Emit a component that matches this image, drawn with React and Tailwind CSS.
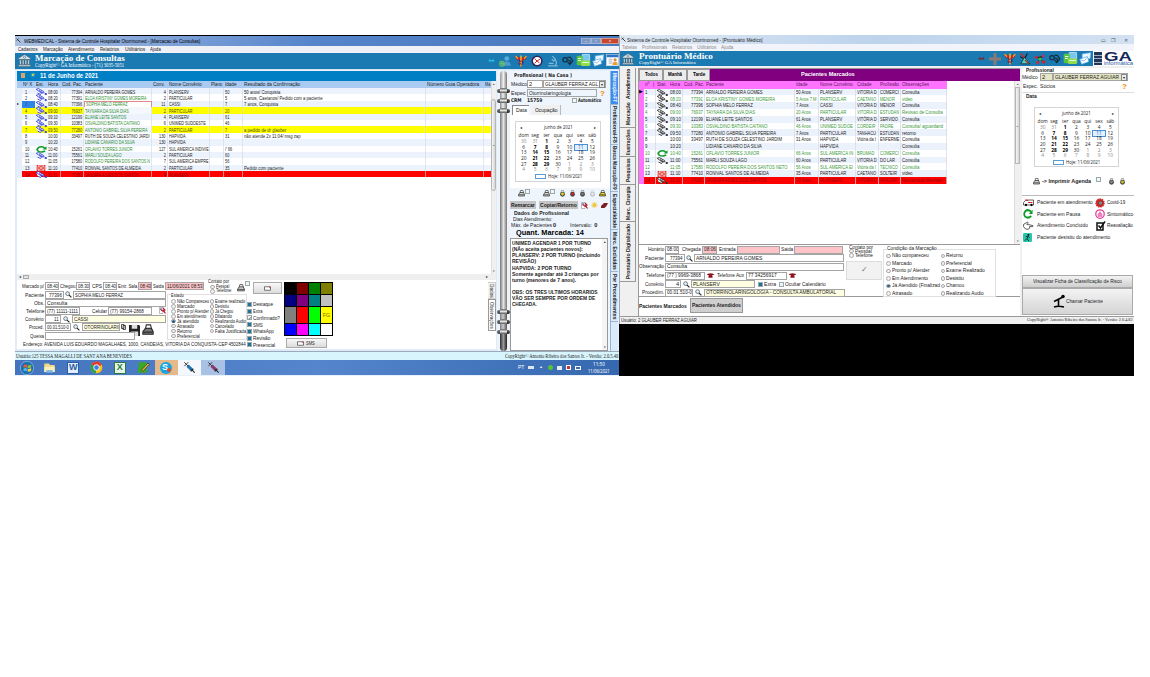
import React, { useLayoutEffect, useRef } from "react";

/* Text squeezed horizontally (or vertically, with v) to a given length. */
function T({ w, v, c = "", right, children }) {
  const ref = useRef(null);
  useLayoutEffect(() => {
    const el = ref.current;
    if (!w) return;
    const n = v ? el.offsetHeight : el.offsetWidth;
    if (n) el.style.transform = v ? `scaleY(${w / n})` : `scaleX(${w / n})`;
  });
  const box = v ? { height: w } : { width: w };
  return (
    <div className={"flex shrink-0 whitespace-nowrap " + (v ? "flex-col " : "") + (right ? "justify-end " : "") + c} style={box}>
      <span ref={ref} className={"block w-max shrink-0 " + (v ? "h-max origin-top [writing-mode:vertical-rl]" : right ? "origin-right" : "origin-left")}>{children}</span>
    </div>
  );
}

function Cell({ children, right, s = "scale-x-[.76]", c = "" }) {
  return (
    <div className={"flex items-center overflow-hidden whitespace-nowrap px-[1px] " + (right ? "justify-end " : "") + c}>
      <span className={"block shrink-0 " + s + (right ? " origin-right" : " origin-left")}>{children}</span>
    </div>
  );
}

function Field({ c = "", children, w, right }) {
  return (
    <div className={"flex h-[8px] shrink-0 items-center overflow-hidden border border-[#a5a5a5] px-[1px] " + (right ? "justify-end " : "") + (c.includes("bg-") ? "" : "bg-white ") + c}>
      {children && <T w={w}>{children}</T>}
    </div>
  );
}
const Label = ({ c, w, children }) => <div className={"flex shrink-0 justify-end pr-[1px] " + c}><T w={w}>{children}</T></div>;
const Radio = ({ on }) => (
  <span className="flex size-[4.5px] shrink-0 items-center justify-center rounded-full border-[0.7px] border-[#aaa] bg-[#f2f2f2]">
    {on && <span className="size-[2.6px] rounded-full bg-[#1f5f88]" />}
  </span>
);
const Check = ({ on, tick, c = "" }) => (
  <span className={"flex size-[5px] shrink-0 items-center justify-center border border-[#9aa] bg-[#f4f4f4] text-[5px] text-[#345] " + c}>
    {on && <span className="size-[3px] bg-[#22709c]" />}{tick && "✓"}
  </span>
);

/* ---------- icons ---------- */
const Hand = ({ color }) => (
  <svg viewBox="0 0 24 14" className="h-[7px] w-[12px] shrink-0" fill="#fff" stroke={color} strokeWidth="1.7">
    <path d="M2 3 Q7 -1 10 3 L17 7 Q20 9 16 10 L12 9 M3 3 L11 9 Q14 12 11 13 L5 10 M8 5 L15 9 M20 11h3v2h-3z" />
  </svg>
);
const Refresh = ({ c = "h-[7px] w-[11px]" }) => (
  <svg viewBox="0 0 24 20" preserveAspectRatio="none" className={c + " shrink-0"} fill="none" stroke="#0b9c2a" strokeWidth="4">
    <path d="M19 5 Q12 0 6 4 Q0 10 5 15 Q12 20 20 14" /><path d="M23 1v9h-9z" fill="#0b9c2a" stroke="none" />
  </svg>
);
const Mail = () => (
  <svg viewBox="0 0 20 14" className="h-[6px] w-[10px] shrink-0"><rect width="20" height="14" fill="#e32218" /><path d="M3 2l14 10M17 2L3 12M3 2h14v10H3z" fill="none" stroke="#fff" strokeWidth="1.5" /></svg>
);
const Mag = ({ c = "" }) => (
  <svg viewBox="0 0 12 12" className={"size-[7px] shrink-0 " + c}><circle cx="4.5" cy="4.5" r="3.3" fill="#d8eefa" stroke="#444" strokeWidth="1.1" /><path d="M7 7l4 4" stroke="#222" strokeWidth="2" /></svg>
);
const Printer = ({ color = "#d4d4d4", c = "size-[7px]" }) => (
  <svg viewBox="0 0 14 14" className={c + " shrink-0"}><path d="M4 6l1-5h5l1 5z" fill="#fff" stroke="#333" strokeWidth="1.3" /><path d="M1 9l3-4h7l2 4v3H1z" fill={color} stroke="#222" strokeWidth="1.3" /><path d="M2 9.5h10" stroke="#222" strokeWidth="1.3" /></svg>
);
const Gem = ({ color }) => (
  <svg viewBox="0 0 14 14" className="size-[7px] shrink-0"><path d="M4 5l1-4h4l1 4" fill="#fff" stroke="#555" /><circle cx="7" cy="8.5" r="4.8" fill="#444" /><circle cx="7" cy="8" r="2.8" fill={color} /></svg>
);
const Temple = ({ c }) => (
  <svg viewBox="0 0 24 24" className={c + " shrink-0"} fill="#d8e4ea" stroke="#3c5663" strokeWidth=".9">
    <path d="M1 8L12 1l11 7v2H1zM3 11h3v9H3zM8 11h3v9H8zM13 11h3v9h-3zM18 11h3v9h-3zM1 20h22v3H1z" /><circle cx="12" cy="6" r="2" />
  </svg>
);
const SnakeStaff = ({ c }) => (
  <svg viewBox="0 0 20 20" className={c + " shrink-0"}>
    <path d="M0 2l6 1 4 3 4-3 6-1-3 6-5 1H8L3 8z" fill="#c4222a" />
    <path d="M1 2l4 4M19 2l-4 4" stroke="#f3c422" strokeWidth="2" />
    <path d="M6 9q8 1 7 4t-5 2l3 4" fill="none" stroke="#22358f" strokeWidth="2.6" />
    <path d="M10 1v18" stroke="#f0c322" strokeWidth="2.4" /><path d="M13 9q-7 2-5 5l4 2" fill="none" stroke="#c4222a" strokeWidth="1.8" />
  </svg>
);
const UserPlus = ({ c }) => (
  <svg viewBox="0 0 20 20" className={c + " shrink-0"}><circle cx="13" cy="6" r="4" fill="#5aa7dd" /><path d="M6 18q1-7 7-7t7 7z" fill="#4c99d3" /><circle cx="5" cy="14.500" r="4" fill="none" stroke="#5fc05f" strokeWidth="2" /><path d="M5 12v5M2.5 14.500h5" stroke="#7ad07a" strokeWidth="1.6" /></svg>
);
const ClockI = ({ c }) => (
  <svg viewBox="0 0 20 20" className={c + " shrink-0"}><circle cx="10" cy="10" r="8" fill="#fff" stroke="#33245d" strokeWidth="2.6" /><path d="M6 6l4 4 5-3M6 14l4-4 4 3" stroke="#c5252b" strokeWidth="1.6" fill="none" /></svg>
);
const Scope = ({ c }) => (
  <svg viewBox="0 0 20 20" className={c + " shrink-0"} fill="none" stroke="#7fb9d8" strokeWidth="2"><path d="M9 2l5 5-3 3-3-3M13 8q5 4 1 9M2 18h16M3 14h8" /></svg>
);
const Eye = ({ c }) => (
  <svg viewBox="0 0 20 16" className={c + " shrink-0"} fill="none" stroke="#142d3b" strokeWidth="2"><circle cx="5" cy="6" r="3.600" /><path d="M9 2h5l4 6-5 6-4-5M9 6l5 2-1 6" /></svg>
);
const Money = ({ c }) => (
  <svg viewBox="0 0 22 20" className={c + " shrink-0"}><rect x="9" y="1" width="11" height="10" rx="1" fill="#79c7ec" stroke="#d8f2fb" /><rect x="1" y="3" width="9" height="14" rx="2" fill="#57c247" /><rect x="7" y="10" width="14" height="8" rx="2" fill="#8fdc4f" /><path d="M3 7h5M9 13h10M3 10h4" stroke="#efffe6" strokeWidth="1.4" /></svg>
);
const Cards = ({ c }) => (
  <svg viewBox="0 0 20 20" className={c + " shrink-0"}><path d="M5 3l13-2-1 9-12 2z" fill="#e9f6ff" stroke="#74bdf0" /><path d="M1 11l12-4 2 8-11 4z" fill="#fff" stroke="#4ca5ef" /><path d="M2 12l6 2 5-6" fill="none" stroke="#58a9e8" /></svg>
);
const Sheet = ({ c }) => (
  <svg viewBox="0 0 20 20" className={c + " shrink-0"}><rect x="1" y="1" width="18" height="17" fill="#fff" stroke="#d6e6f1" /><path d="M1 3h18" stroke="#2e72c8" strokeWidth="4" /><path d="M4 8h6M4 11h6M4 14h6" stroke="#7b8a98" /><circle cx="14" cy="9" r="2.500" fill="#d98b44" /><path d="M10 17q0-5 4-5t4 5z" fill="#e8a13a" /></svg>
);
const Flask = ({ c }) => (
  <svg viewBox="0 0 20 20" className={c + " shrink-0"}><path d="M3 1l8 9" stroke="#c52a27" strokeWidth="2.5" /><path d="M9 7l9 11H3z" fill="#4fd0c5" stroke="#192b2e" strokeWidth="1.3" /><path d="M14 1l-4 7M2 6l5 3" stroke="#111" strokeWidth="1.8" /><path d="M10 12l6 6" stroke="#c52a27" strokeWidth="2" /></svg>
);
const Molecule = ({ c }) => (
  <svg viewBox="0 0 20 20" className={c + " shrink-0"}><path d="M4 7l6 3 6-5M10 10l-4 6M10 10l6 6" stroke="#222" strokeWidth="1.5" /><circle cx="4" cy="7" r="2.6" fill="#cf2634" /><circle cx="15" cy="5" r="2.6" fill="#bd2d65" /><circle cx="10" cy="10" r="3" fill="#35b94e" /><circle cx="6" cy="16" r="2.6" fill="#d1293a" /><circle cx="16" cy="15" r="3" fill="#ca2430" /></svg>
);
const Arrows = ({ color }) => (
  <svg viewBox="0 0 10 8" className="h-[5px] w-[7px] shrink-0"><path d="M0 4l3-3v2h4V1l3 3-3 3V5H3v2z" fill={color} /></svg>
);
const Syringe = ({ color }) => (
  <svg viewBox="0 0 20 20" className="size-[13px]" fill="none"><path d="M2 2l7 7M2 8l6-6" stroke="#333" strokeWidth="1.5" /><path d="M7 7l7 7" stroke={color} strokeWidth="5" /><path d="M13 13l5 5M12 16l4-4" stroke="#222" strokeWidth="1.6" /></svg>
);
const Phone = () => (
  <svg viewBox="0 0 16 10" className="h-[5px] w-[7px] shrink-0"><path d="M0 4q0-4 8-4t8 4h-4l1 6H3l1-6z" fill="#8e1420" /></svg>
);
const Pair = () => (
  <svg viewBox="0 0 14 14" className="size-[7px] shrink-0"><path d="M1 1h7v12H1z" fill="#fff" stroke="#777" /><path d="M8 2l4 4-3 1 4 6M3 5l6 4" stroke="#c01825" strokeWidth="2.2" /><circle cx="4" cy="4" r="1.6" fill="#223da8" /></svg>
);
const Question = () => <span className="shrink-0 text-[8px] font-bold text-[#f08a00]">?</span>;

/* ---------- calendar ---------- */
const weeks = [
  [30, 31, 1, 2, 3, 4, 5], [6, 7, 8, 9, 10, 11, 12], [13, 14, 15, 16, 17, 18, 19],
  [20, 21, 22, 23, 24, 25, 26], [27, 28, 29, 30, 1, 2, 3], [4, 5, 6, 7, 8, 9, 10],
];
function Calendar({ c }) {
  return (
    <div className={"border border-[#d5d5d5] bg-white font-['Open_Sans','Noto_Sans',sans-serif] text-[4.8px] leading-[5.6px] text-[#222] " + c}>
      <div className="flex h-[8px] items-center justify-between px-[2px] pt-[4px] text-[4px]"><span>◂</span><T w={29} c="text-[5.2px]">junho de 2021</T><span>▸</span></div>
      <div className="mt-[3px] grid h-[6px] grid-cols-7 text-center">
        {["dom", "seg", "ter", "qua", "qui", "sex", "sáb"].map((d) => <span key={d}>{d}</span>)}
      </div>
      {weeks.map((wk, i) => (
        <div key={i} className="grid h-[5.65px] grid-cols-7 text-center">
          {wk.map((d, j) => {
            const out = (i === 0 && j < 2) || (i === 4 && j > 3) || i === 5;
            const bold = !out && (j === 2 || (j === 1 && i > 0));
            const today = i === 1 && j === 5;
            return <span key={j} className={(out ? "text-[#888] " : "") + (bold ? "font-bold text-black " : "") + (today ? "bg-[#e2f0ff] text-[#2a6bb0] outline outline-[0.7px] outline-[#4a90d9]" : "")}>{d}</span>;
          })}
        </div>
      ))}
      <div className="flex h-[7px] items-center justify-center gap-[2px]"><span className="h-[4.5px] w-[11px] border border-[#5b9bd5]" /><T w={34}>Hoje: 11/06/2021</T></div>
    </div>
  );
}

/* ---------- left window ---------- */
const gridL = "grid grid-cols-[5px_13px_12px_13.5px_23.5px_68px_15.5px_42.5px_13.5px_19px_183px_58.5px_6.500px]";
const rowsL = [
  [1, "h", "08:00", "77394", "ARNALDO PEREIRA GOMES", 4, "PLANSERV", "", "50", "50 anos/ Conquista"],
  [2, "h", "08:20", "77391", "ELOA KRISTINY GOMES MOREIRA", 2, "PARTICULAR", "", "5", "5 anos, Caetanos/ Pedido com a paciente", "g"],
  [3, "h", "08:40", "77396", "SOPHIA MELO FERRAZ", 11, "CASSI", "", "7", "7 anos, Conquista", "g"],
  [4, "h", "09:00", "76937", "TAYNARA DA SILVA DIAS", 2, "PARTICULAR", "", "20", "", "y"],
  [5, "h", "09:10", "12199", "ELIANE LEITE SANTOS", 4, "PLANSERV", "", "61", "", "g"],
  [6, "h", "09:30", "10383", "OSVALDINO BATISTA CAITANO", 6, "UNIMED SUDOESTE", "", "46", "", "g"],
  [7, "h", "09:50", "77280", "ANTONIO GABRIEL SILVA PEREIRA", 2, "PARTICULAR", "", "7", "a pedido de dr glauber", "y"],
  [8, "", "10:00", "33497", "RUTH DE SOUZA CELESTINO JARDI", 130, "HAPVIDA", "", "31", "não atende 2x 11:04/ msg zap"],
  [9, "", "10:20", "", "LIDIANE CANARIO DA SILVA", 130, "HAPVIDA", "", "", "", "g"],
  [10, "r", "10:40", "15261", "OFLAVIO TORRES JUNIOR", 127, "SUL AMERICA INDIVIE", "", "/' 66", "", "g"],
  [11, "h", "11:00", "75561", "MARLI SOUZA LAGO", 2, "PARTICULAR", "", "60", "", "g"],
  [12, "", "11:05", "17580", "RODOLFO PEREIRA DOS SANTOS N", 7, "SUL AMERICA EMPRE", "", "56", "", "g"],
  [13, "m", "11:10", "77410", "RONIVAL SANTOS DE ALMEIDA", 2, "PARTICULAR", "", "35", "Pedido com paciente"],
  [14, "h", "11:11", "77281", "JANDIRA ALVES DOS SANTOS", 4, "PLANSERV", "", "73", "", "x"],
];
const Status = ({ k, color }) => k === "h" ? <Hand color={color} /> : k === "r" ? <Refresh /> : k === "m" ? <Mail /> : null;

function TableL() {
  return (
    <div className="flex h-[193px] w-[479px] bg-white text-[5.1px] leading-[6px]">
      <div className="w-[473.5px] overflow-hidden">
        <div className={gridL + " h-[7.5px] bg-[#a9cbf2] text-[5.4px] text-[#222]"}>
          <Cell /><Cell s="scale-x-[.85]">Nº X</Cell><Cell s="scale-x-[.85]">Est.</Cell><Cell s="scale-x-[.85]">Hora</Cell><Cell s="scale-x-[.85]">Cod. Pac.</Cell><Cell s="scale-x-[.85]">Paciente</Cell><Cell s="scale-x-[.85]">Conv.</Cell><Cell s="scale-x-[.85]">Nome Convênio</Cell><Cell s="scale-x-[.82]">Plano</Cell><Cell s="scale-x-[.85]">Idade</Cell><Cell s="scale-x-[.88]">Resultado da Confirmação</Cell><Cell s="scale-x-[.88]">Número Guia Operadora</Cell><Cell s="scale-x-[.7]">Ma</Cell>
        </div>
        {rowsL.map((r, i) => {
          const k = r[10];
          const bg = k === "x" ? "bg-[#ff0000] text-[#8a0000]" : k === "y" ? "bg-[#ffff00] text-[#4c4c00]" : i % 2 ? "bg-white text-[#222]" : "bg-[#ecf3fd] text-[#222]";
          const line = "border-r border-[#d4dae2]/60 ";
          const name = k === "y" ? "bg-[#f4f8fd] text-[#2e8b2e] " : k === "g" ? "text-[#2e8b2e] " : "";
          return (
            <div key={i} className={gridL + " h-[6.4px] " + bg}>
              <div className="flex items-center bg-[#e6eefa] text-[4px] text-black">{i === 2 ? "▸" : ""}</div>
              <Cell c={i === 2 ? "bg-[#2f86e6] pl-[3px] text-[#1e5694]" : "pl-[3px]"}>{r[0]}</Cell>
              <div className="flex items-center justify-center"><Status k={r[1]} color="#2c36d8" /></div>
              <Cell c={line}>{r[2]}</Cell><Cell right c={line}>{r[3]}</Cell>
              <Cell s="scale-x-[.735]" c={line + name + (i === 2 ? "border border-[#e08a8a] bg-white" : "")}>{r[4]}</Cell>
              <Cell right c={line}>{r[5]}</Cell><Cell s="scale-x-[.74]" c={line}>{r[6]}</Cell><Cell c={line} /><Cell c={line}>{r[8]}</Cell><Cell c={line} s="scale-x-[.83]">{r[9]}</Cell><Cell c={line} /><Cell />
            </div>
          );
        })}
      </div>
      <div className="flex w-[5.5px] flex-col items-center justify-between border-l border-[#ddd] bg-[#f0f0f0] text-[3px] text-[#333]">
        <span>▴</span><div className="mb-auto mt-[12px] flex h-[92px] w-[5px] items-center justify-center rounded-sm border border-[#b5b5b5] bg-gradient-to-r from-[#f7f7f7] to-[#d4d4d4]">≡</div><span>▾</span>
      </div>
    </div>
  );
}

const est = [["Não Compareceu", 32, "Exame realizado", 30], ["Marcado", 17, "Desistiu", 14], ["Pronto p/ Atender", 32, "Já Chegou", 18], ["Em atendimento", 29, "Dilatando", 17], ["Já atendido", 22, "Realizando Audio", 31], ["Atrasado", 17, "Cancelado", 19], ["Retorno", 15, "Falta Justificada", 31], ["Preferencial", 23, "", 0]];
const sw = ["bg-[#000]", "bg-[#800000]", "bg-[#008000]", "bg-[#808000]", "bg-[#000080]", "bg-[#800080]", "bg-[#008080]", "bg-[#c0c0c0]", "bg-[#808080]", "bg-[#f00]", "bg-[#0f0]", "bg-[#ff0]", "bg-[#00f]", "bg-[#f0f]", "bg-[#0ff]", "bg-[#fff]"];
const Envelope = () => <svg viewBox="0 0 14 9" className="h-[5px] w-[7px] shrink-0"><path d="M1 1h12v7H1z" fill="#fff" stroke="#333" strokeWidth="1.3" /><path d="M9 1h4v3z" fill="#c22" /></svg>;

function FormL() {
  const row = "flex h-[8.2px] items-center";
  return (
    <div className="flex h-[69px] w-[479px] bg-white pt-[2px] text-[5.4px] leading-[6px] text-[#222]">
      <div className="w-[229px]">
        <div className="flex h-[8.5px] items-center">
          <Label c="w-[28px]" w={22}>Marcado p/</Label><Field c="w-[14px]" w={11.5}>08:40</Field>
          <Label c="w-[17px]" w={15.5}>Chegou</Label><Field c="w-[14px]" w={11.5}>08:30</Field>
          <Label c="w-[13px]" w={10}>CPS</Label><Field c="w-[14px]" w={11.5}>08:40</Field>
          <Label c="w-[21px]" w={19}>Entr. Sala</Label><Field c="w-[14px] bg-[#ffc4c8]" w={11.5}>08:43</Field>
          <Label c="w-[13px]" w={11}>Saida</Label><Field c="w-[39px] bg-[#ffc4c8]" w={36}>11/06/2021 08:53</Field>
          <div className="ml-[4px] h-[12px] w-[26px] text-[4.6px] leading-[4.4px]">
            <T w={21}>Contato por</T>
            <div className="flex items-center gap-[1px] pl-[2px]"><Radio /><T w={13}>Pessoal</T></div>
            <div className="flex items-center gap-[1px] pl-[2px]"><Radio /><T w={15}>Telefone</T></div>
          </div>
        </div>
        <div className="flex h-[49.5px]">
          <div className="w-[149px]">
            <div className={row}><Label c="w-[28px]" w={19}>Paciente</Label><Field c="w-[19px]" w={13} right>77396</Field><Mag c="mx-[1px]" /><Field c="w-[93px]" w={48}>SOPHIA MELO FERRAZ</Field></div>
            <div className={row}><Label c="w-[28px]" w={10}>Obs.</Label><Field c="w-[121px]" w={20}>Consulta</Field></div>
            <div className={row}><Label c="w-[28px]" w={18}>Telefone</Label><Field c="w-[35px]" w={31}>(77) 11111-1111</Field><Label c="w-[28px]" w={15}>Celular</Label><Field c="w-[44px]" w={34}>(77) 99154-2868</Field><div className="ml-[7px]"><Pair /></div></div>
            <div className={row}><Label c="w-[28px]" w={19}>Convênio</Label><Field c="w-[16px]" w={5} right>11</Field><Mag c="mx-[2px]" /><Field c="w-[94px] bg-[#ffffe1]" w={14}>CASSI</Field></div>
            <div className={row}><Label c="w-[28px]" w={15}>Proced.</Label><Field c="w-[26px]" w={22}>00.01.510-0</Field><Mag c="mx-[2px]" /><Field c="w-[38px] bg-[#ffffe1]" w={35}>OTORRINOLARII</Field>
              <svg viewBox="0 0 10 12" className="ml-[1px] h-[6px] w-[5px] shrink-0"><path d="M1 1h5v8H1zM4 3h5v8H4z" fill="#fff" stroke="#222" strokeWidth="1.5" /></svg>
              <svg viewBox="0 0 12 12" className="ml-[3px] mt-[7px] size-[11px] shrink-0"><path d="M0 0h11l1 1v11H0z" fill="#222" /><path d="M3 0h6v4H3zM2 7h8v5H2z" fill="#ddd" /></svg>
              <div className="ml-[2px] mt-[6px]"><Printer color="#777" c="size-[12px]" /></div>
            </div>
            <div className={row}><Label c="w-[28px]" w={14}>Queixa</Label><Field c="w-[90px]" /></div>
          </div>
          <div className="ml-[1px] mt-[3px] h-[46px] w-[80px] border border-[#e0e0e0] text-[5px] leading-[5px]">
            <T w={13} c="-mt-[2px] ml-[3px] mb-[1.5px] w-fit bg-white">Estado</T>
            {est.map((e, i) => (
              <div key={i} className="flex h-[4.95px] items-center pl-[3px]">
                <Radio on={i === 4} /><div className="ml-[1px] w-[33px]"><T w={e[1]}>{e[0]}</T></div>
                {e[2] && <><Radio /><div className="ml-[1px]"><T w={e[3]}>{e[2]}</T></div></>}
              </div>
            ))}
          </div>
        </div>
        <div className="flex h-[7px] items-center pl-[6px]"><T w={223}>Endereço: AVENIDA LUIS EDUARDO MAGALHAES, 1000, CANDEIAS, VITORIA DA CONQUISTA-CEP 4502844</T></div>
      </div>
      <div className="w-[38px]">
        <div className="flex h-[15px] items-start">
          <div className="-ml-[9px] mt-[2px]"><Printer c="h-[8px] w-[8px]" /></div><Check c="-mt-[1px]" />
          <div className="ml-[3px] flex h-[12px] w-[29px] items-center justify-center border border-[#aaa] bg-gradient-to-b from-[#f8f8f8] to-[#dcdcdc]"><Envelope /></div>
        </div>
        {[["Destaque", 20], ["Extra", 10], ["Confirmado?", 27], ["SMS", 10], ["WhatsApp", 21], ["Revisão", 17], ["Presencial", 22]].map((x, i) => (
          <div key={i} className={"flex h-[6.75px] items-center gap-[1px] pl-[1px] " + (i === 0 ? "mt-[4px]" : "")}><Check on={i !== 2} tick={i === 2} /><T w={x[1]}>{x[0]}</T></div>
        ))}
      </div>
      <div className="w-[50px]">
        <div className="grid h-[54px] w-[49px] grid-cols-4 gap-[1px] border border-black bg-black">
          {sw.map((s, i) => <div key={i} className={"flex items-center justify-center text-[#776d00] " + s}>{i === 11 ? "FG" : ""}</div>)}
        </div>
        <div className="ml-[1.5px] mt-[2px] flex h-[10px] w-[41px] items-center justify-center gap-[2px] border border-[#aaa] bg-gradient-to-b from-[#f8f8f8] to-[#dcdcdc]"><Envelope /><T w={9}>SMS</T></div>
      </div>
      <div className="ml-auto w-[8px] text-[5.4px] leading-[6px]">
        <div className="flex h-[17px] justify-center border border-l-0 border-[#ccc] bg-[#f2f2f2] pt-[1px]"><T v w={14}>Dados</T></div>
        <div className="flex h-[32px] justify-center border border-[#999] bg-white pt-[2px]"><T v w={27}>Observações</T></div>
      </div>
    </div>
  );
}

const Coils = () => (
  <div className="flex flex-col gap-[5px]">
    {[0, 1, 2].map((i) => (
      <div key={i} className="flex h-[5px] items-center">
        <span className="h-[4px] w-[3px] rounded-l-full bg-gradient-to-b from-[#777] to-[#444]" />
        <span className="h-[5px] w-[7px] bg-gradient-to-b from-[#666] via-[#e2e2e2] to-[#555]" />
        <span className="h-[4px] w-[3px] rounded-r-full bg-gradient-to-b from-[#666] to-[#222]" />
      </div>
    ))}
  </div>
);
const Spiral = () => (
  <div className="flex w-[13px] flex-col items-center bg-[#eef3f9]">
    <div className="h-[17px] w-[7px] rounded-t-full bg-gradient-to-r from-[#999] via-[#f0f0f0] to-[#777]" />
    <div className="bg-[linear-gradient(90deg,transparent_3px,#888_3px,#eee_6px,#777_10px,transparent_10px)]"><Coils /></div>
    <div className="h-[196px] w-[7px] bg-gradient-to-r from-[#777] via-[#e4e4e4] to-[#777]" />
    <div className="bg-[linear-gradient(90deg,transparent_3px,#777_3px,#ccc_6px,#555_10px,transparent_10px)]"><Coils /></div>
    <div className="h-[17px] w-[7px] rounded-b-full bg-gradient-to-r from-[#333] via-[#999] to-[#222]" />
  </div>
);

function PanelL() {
  const notes = [["UNIMED AGENDAR 1 POR TURNO", 79], ["(NÃo aceita pacientes novos):", 71], ["PLANSERV: 2 POR TURNO (incluindo", 88], ["REVISÃO)", 24], ["HAPVIDA: 2 POR TURNO", 59], ["Somente agendar até 3 crianças por", 87], ["turno (menores de 7 anos).", 64], null, ["OBS: OS TRES ULTIMOS HORARIOS", 86], ["VÃO SER SEMPRE POR ORDEM DE", 83], ["CHEGADA.", 25]];
  const tabs = [["Marcação-F7", 29, "h-[34px] bg-[#3d8cf0] text-white"], ["Profissional-F8", 37, "h-[40px]"], ["Busca Marcação-F9", 44, "h-[47px]"], ["Especialidade", 34, "h-[38px]"], ["Marc. Excluidas", 38, "h-[42px]"], ["Por Procedimentos", 45, "h-[50px]"]];
  return (
    <>
      <div className="flex w-[100px] flex-col bg-[#eef5fd] text-[5.6px] leading-[7px] text-[#222]">
        <T w={58} c="ml-[4px] mt-[1px] h-[7px] font-['DejaVu_Sans',sans-serif] text-[5.2px] font-bold">Profissional ( Na Casa )</T>
        <div className="mt-[1px] flex h-[8px] items-center"><T w={16} c="ml-[1px]">Médico</T><Field c="w-[16px]" w={3}>2</Field><Field c="w-[63px]" w={53}>GLAUBER FERRAZ AGL</Field><span className="-ml-[7px] flex h-[7px] w-[6px] items-center justify-center border border-[#888] bg-[#ececec] text-[4px]">▾</span></div>
        <div className="mt-[1px] flex h-[8px] items-center"><T w={15} c="ml-[1px] mr-[1px]">Espec</T><Field c="w-[70px] mr-[3px] bg-[#eef5fd]" w={42}>Otorrinolaringologia</Field><Question /></div>
        <div className="flex h-[7px] items-center font-['DejaVu_Sans',sans-serif] text-[5px] font-bold"><T w={11} c="ml-[1px]">CRM</T><T w={15} c="ml-[5px] mr-[30px]">15759</T><Check /><T w={23} c="ml-[1px]">Automático</T></div>
        <div className="mt-[1px] flex h-[10px] items-center"><div className="ml-[2px] flex h-[10px] w-[17px] items-center justify-center border-l border-t border-[#888] bg-white"><T w={11}>Data</T></div><div className="ml-[3px] flex h-[10px] w-[29px] items-center justify-center border-r border-[#bbb] bg-[#f0f0f0]"><T w={23}>Ocupação</T></div></div>
        <div className="h-[74px] bg-white pl-[5px] pt-[6px]"><Calendar c="h-[61px] w-[86px] px-[2px]" /></div>
        <div className="flex h-[11px] items-center pl-[8px]"><Printer /><Check c="mb-[5px]" /><div className="w-[13px]" /><Printer /><Check c="mb-[5px] mr-[4px]" /><div className="flex gap-[3px]"><Gem color="#e9d420" /><Gem color="#d31f34" /><Gem color="#777" /><div className="opacity-30"><Gem color="#ccc" /></div><Printer color="#e8d72a" /></div></div>
        <div className="mt-[2px] flex h-[8px] items-center font-bold"><div className="flex h-[8px] w-[26px] items-center justify-center bg-[#c4c4c4]"><T w={24}>Remarcar</T></div><div className="ml-[3px] flex h-[8px] w-[39px] items-center justify-center bg-[#c4c4c4]"><T w={37}>Copiar/Retorno</T></div><div className="ml-[3px] flex items-center gap-[3px]"><Pair /><span className="text-[8px] text-[#f1c21a]">☀</span><svg viewBox="0 0 14 10" className="h-[5px] w-[7px]"><path d="M0 6l6-6h8l-3 6-4 4H0z" fill="#7a1e1e" /></svg></div></div>
        <T w={55} c="ml-[4px] mt-[1px] h-[6px] font-bold leading-[6px]">Dados do Profissional</T>
        <T w={39} c="ml-[3px] h-[6px] leading-[6px]">Dias Atendimento:</T>
        <div className="flex h-[6px] items-center"><T w={41} c="ml-[1px]">Máx. de Pacientes</T><b className="ml-[1px]">0</b><T w={22} c="ml-[14px]">Intervalo:</T><b className="ml-[2px]">0</b></div>
        <T w={68} c="ml-[6px] h-[10px] text-[8px] font-bold leading-[9px] text-black">Quant. Marcada: 14</T>
        <div className="flex h-[114px] w-[98px] justify-between border border-[#999] bg-white text-[5.4px] font-bold leading-[6.1px]">
          <div className="pl-[1px] pt-[1px]">{notes.map((n, i) => n ? <T key={i} w={n[1]}>{n[0]}</T> : <div key={i} className="h-[6.1px]" />)}</div>
          <div className="-ml-2 flex w-[5px] flex-col items-center justify-between bg-[#f4f4f4] text-[3px]"><span>▴</span><span>▾</span></div>
        </div>
      </div>
      <div className="w-[8px] border-l border-[#8fb5dd] bg-[#dcebfa] text-[5.4px] font-bold leading-[6px] text-[#222]">
        {tabs.map((t) => <div key={t[0]} className={"flex items-center justify-center border-b border-[#9fb6cc] " + t[2]}><T v w={t[1]}>{t[0]}</T></div>)}
      </div>
    </>
  );
}

function TaskBar() {
  const slot = "flex h-[15px] w-[23.3px] items-center justify-center";
  return (
    <div className="flex h-[15px] items-center bg-gradient-to-r from-[#4474bd] via-[#5586cd] to-[#3568ae]">
      <div className={slot}><svg viewBox="0 0 20 20" className="size-[14px]"><circle cx="10" cy="10" r="9.5" fill="#1d6cae" stroke="#8fc4ea" /><path d="M5 6q3-2 5 0v4q-2-2-5 0z" fill="#ea5b28" /><path d="M11 6q2 1 5-1v4q-3 2-5 1z" fill="#8ac43f" /><path d="M5 11q3-2 5 0v4q-2-2-5 0z" fill="#4db7ee" /><path d="M11 11q2 1 5-1v4q-3 2-5 1z" fill="#f7cb3c" /></svg></div>
      <div className={slot}><svg viewBox="0 0 20 20" className="size-[13px]"><path d="M2 4h7l2 2h7v11H2z" fill="#f2d98a" /><path d="M2 9h16v8H2z" fill="#fbeeb8" /><path d="M5 14h10v4H5z" fill="#7cb7e6" /></svg></div>
      <div className={slot}><div className="flex size-[12px] items-center justify-center border border-[#2b5ca8] bg-[#e4edf9] text-[9px] font-bold text-[#2b5ca8]">W</div></div>
      <div className={slot}><svg viewBox="0 0 20 20" className="size-[13px]"><circle cx="10" cy="10" r="9" fill="#fbc116" /><path d="M10 10L2 5a9 9 0 0 1 16 1z" fill="#e33b2e" /><path d="M10 10l-8-5a9 9 0 0 0 7 14z" fill="#2ba24c" /><circle cx="10" cy="10" r="4.3" fill="#3d7ee0" stroke="#fff" strokeWidth="1.4" /></svg></div>
      <div className={slot}><div className="flex size-[12px] items-center justify-center border border-[#2a7c3e] bg-[#e8f4e9] text-[9px] font-bold text-[#1c7a38]">X</div></div>
      <div className={slot}><svg viewBox="0 0 20 20" className="size-[13px]"><path d="M3 2h12v16H1z" fill="#39a829" /><path d="M7 14L17 3l2 2L9 16z" fill="#f0c23a" stroke="#222" /></svg></div>
      <div className={slot + " bg-[#e6b98a]"}><div className="flex size-[12px] items-center justify-center rounded-full bg-[#16a5e0] text-[9px] font-bold text-white">S<span className="-ml-[1px] mt-[5px] size-[4px] rounded-full bg-[#e84b21]" /></div></div>
      <div className={slot + " bg-[#f4f8fd]"}><Syringe color="#2375ad" /></div>
      <div className={slot + " bg-[#a9c1e4]"}><Syringe color="#8d3a66" /></div>
      <div className="ml-auto flex items-center gap-[4px] text-[5px] leading-[6.5px] text-white">
        <T w={6}>PT</T><span className="h-[3px] w-[6px] bg-[#dfe6f0]" /><span className="mx-[2px] text-[4px]">▴</span>
        <span className="size-[5px] rounded-full bg-[#55c23a]" /><span className="h-[4px] w-[5px] bg-[#e8edf6]" /><span className="size-[5px] border border-white bg-[#c93636]" /><span className="h-[4px] w-[6px] border border-white" />
        <div className="ml-[3px] mr-[9px] flex flex-col items-center font-['Noto_Sans',sans-serif]"><T w={12}>11:50</T><T w={22}>11/06/2021</T></div>
      </div>
    </div>
  );
}

const Menu = ({ items, c }) => <div className={"flex items-center " + c}>{items.map((m) => <T key={m[0]} w={m[1]} c={m[2]}>{m[0]}</T>)}</div>;

function LeftWindow() {
  return (
    <div className="flex h-[341px] w-[604px] flex-col border-t border-black bg-[#e8f1fb]">
      <div className="flex h-[9.5px] items-center bg-gradient-to-r from-[#a9c0e2] via-[#5584cb] to-[#4a78bd] text-[5.6px] leading-[8px] text-black">
        <svg viewBox="0 0 8 8" className="ml-[1px] mr-[3px] size-[5px]"><path d="M1 1l6 6M4 1L1 4" stroke="#3a2a2a" strokeWidth="1.5" /></svg>
        <T w={176}>WEBMEDICAL - Sistema de Controle Hospitalar Otorrinomed - [Marcacao de Consultas]</T>
        <div className="ml-auto flex h-[6px] text-[4px] leading-[4px] text-white"><span className="w-[10px] border border-[#9db4d6] bg-[#7a97c6] text-center">–</span><span className="w-[10px] border border-[#9db4d6] bg-[#7a97c6] text-center">▫</span><span className="w-[18px] border border-[#d59a90] bg-[#c8452f] text-center">x</span></div>
      </div>
      <Menu c="h-[7px] bg-[#f0f1f6] pl-[3px] text-[5.4px] leading-[7px] text-[#222]" items={[["Cadastros", 20, "mr-[5px]"], ["Marcação", 20, "mr-[5px]"], ["Atendimento", 26, "mr-[6px]"], ["Relatórios", 19, "mr-[6px]"], ["Utilitários", 20, "mr-[5px]"], ["Ajuda", 11, ""]]} />
      <div className="flex h-[16.5px] items-center bg-[#1c7ab2] text-white">
        <Temple c="ml-[3px] h-[13px] w-[13px]" />
        <div className="ml-[4px] font-['Liberation_Serif',serif]"><T w={90} c="text-[8.6px] font-bold leading-[8px]">Marcação de Consultas</T><T w={89} c="text-[5.4px] leading-[6px]">CopyRight© GA Informática - (71) 3035-5051</T></div>
        <div className="ml-auto flex items-center"><Arrows color="#27c0d8" /><UserPlus c="ml-[4px] mr-[4px] size-[12px]" /><SnakeStaff c="mr-[4px] size-[12px]" /><ClockI c="mr-[4px] size-[12px]" /><Scope c="mr-[3px] size-[12px]" /><Eye c="mr-[2px] h-[10px] w-[12px]" /><Money c="mr-[1px] size-[15px]" /><Cards c="mr-[1px] size-[13px]" /><Sheet c="size-[13px]" /></div>
      </div>
      <div className="flex h-[282px] border-t border-[#d4e6f5] pt-[1px]">
        <div className="w-[482px] bg-[#dfebf8] pl-[2px]">
          <div className="flex h-[9.5px] w-[479px] items-center bg-[#007fc4] text-white"><span className="ml-[4px] h-[5px] w-[4px] bg-[#d9a56a]" /><span className="mx-[5px] text-[6px] text-[#f7e93c]">☀</span><T w={58} c="text-[6.6px] font-bold leading-[9px]">11 de Junho de 2021</T></div>
          <TableL />
          <div className="flex h-[6.5px] w-[479px] items-center justify-between bg-[#efefef] px-[2px] text-[4px] leading-[4px] text-[#333]"><span>◂</span><span className="ml-[2px] mr-auto h-[4px] w-[6px] border border-[#aaa] bg-[#e3e3e3]" /><span className="mr-[6px]">▸</span></div>
          <FormL />
        </div>
        <Spiral />
        <PanelL />
      </div>
      <div className="flex h-[9px] items-center justify-between border-t border-[#9ab] bg-[#d8f5fd] px-[1px] font-['Liberation_Serif',serif] text-[5.6px] leading-[7px] text-[#222]"><T w={116}>Usuário:125 TESSA MAGALLI DE SANT ANA BENEVIDES</T><T w={113}>CopyRight© Antonio Ribeiro dos Santos Jr. - Versão: 2.0.5.40</T></div>
      <TaskBar />
    </div>
  );
}

/* ---------- right window ---------- */
const gridR = "grid grid-cols-[4.5px_8px_4px_13.5px_13.5px_22px_90px_24.5px_36.5px_23px_22.5px_45.5px]";
const rowsR = [
  [1, "h", "08:00", "77394", "ARNALDO PEREIRA GOMES", "50 Anos", "PLANSERV", "VITORIA D", "COMERCI", "Consulta"],
  [2, "h", "08:20", "77391", "ELOA KRISTINY GOMES MOREIRA", "5 Anos 7 M", "PARTICULAR", "CAETANO", "MENOR", "video"],
  [3, "h", "08:40", "77396", "SOPHIA MELO FERRAZ", "7 Anos", "CASSI", "VITORIA D", "MENOR", "Consulta"],
  [4, "h", "09:00", "76937", "TAYNARA DA SILVA DIAS", "20 Anos", "PARTICULAR", "VITORIA D", "ESTUDAN", "Revisao de Consulta"],
  [5, "h", "09:10", "12199", "ELIANE LEITE SANTOS", "61 Anos", "PLANSERV", "VITÓRIA D", "SERVIDO", "Consulta"],
  [6, "h", "09:30", "10383", "OSVALDINO BATISTA CAITANO", "46 Anos", "UNIMED SUDOE", "CORDEIR", "PADRE", "Consulta/ aguardand"],
  [7, "h", "09:50", "77280", "ANTONIO GABRIEL SILVA PEREIRA", "7 Anos", "PARTICULAR", "TANHACU", "ESTUDAN", "retorno"],
  [8, "", "10:00", "33497", "RUTH DE SOUZA CELESTINO JARDIM", "31 Anos", "HAPVIDA", "Vitória da l", "ENFERME", "Consulta"],
  [9, "", "10:20", "", "LIDIANE CANARIO DA SILVA", "", "HAPVIDA", "", "", "Consulta"],
  [10, "r", "10:40", "15261", "OFLAVIO TORRES JUNIOR", "66 Anos", "SUL AMERICA IN", "BRUMAD", "COMERCI", "Consulta"],
  [11, "h", "11:00", "75561", "MARLI SOUZA LAGO", "60 Anos", "PARTICULAR", "VITORIA D", "DO LAR", "Consulta"],
  [12, "", "11:05", "17580", "RODOLFO PEREIRA DOS SANTOS NETO", "56 Anos", "SUL AMERICA EI", "Vitória da l", "TECNICO", "Consulta"],
  [13, "m", "11:10", "77410", "RONIVAL SANTOS DE ALMEIDA", "35 Anos", "PARTICULAR", "CAETANO", "SOLTEIR", "video"],
  [14, "h", "11:11", "77281", "JANDIRA ALVES DOS SANTOS", "73 Anos", "PLANSERV", "VITORIA D", "AUXLIAR", "Remarcado-Revisao"],
];
const scaleR = ["scale-x-[.78]", "scale-x-[.76]", "scale-x-[.78]", "scale-x-[.74]", "scale-x-[.74]", "scale-x-[.82]"];

function TableR() {
  const s = "scale-x-[.8]";
  return (
    <div className="flex h-[163.5px] w-[381px] border-b border-[#999] bg-white text-[5.4px] leading-[6.6px]">
      <div className="w-[308px]">
        <div className={gridR + " h-[7.5px] bg-[#ff73ff] text-[5.6px] text-[#5a1a5a]"}>
          <div />{["nº", "|", "Stat.", "Hora", "Cod. Pac.", "Paciente", "Idade", "Nome Convênio", "Cidade", "Profissão", "Observações"].map((h) => <Cell key={h} s="scale-x-[.82]">{h}</Cell>)}
        </div>
        {rowsR.map((r, i) => {
          const red = i === 13;
          const bg = red ? "bg-[#ff0000] text-[#900]" : (i % 2 ? "bg-white " : "bg-[#ecf2fc] ") + ([1, 3, 5, 9, 11].includes(i) ? "text-[#3a9a3a]" : "text-[#222]");
          const line = "border-r border-[#d4dae2]/70";
          return (
            <div key={i} className={gridR + " h-[6.82px] " + bg}>
              <div className="flex items-center bg-[#ff73ff] text-[4.5px] text-black">{i === 0 ? "▶" : ""}</div>
              <Cell s={s}>{r[0]}</Cell><Cell c={line} />
              <div className="flex items-center justify-center"><Status k={r[1]} color="#222" /></div>
              <Cell s={s} c={line}>{r[2]}</Cell><Cell s={s} right c={line}>{r[3]}</Cell>
              {r.slice(4).map((x, j) => <Cell key={j} s={scaleR[j]} c={line}>{x}</Cell>)}
            </div>
          );
        })}
      </div>
      <div className="ml-auto flex w-[6px] flex-col items-center justify-between border-l border-[#ddd] bg-[#f0f0f0] text-[3px] leading-[6px] text-[#333]">
        <span>▴</span><div className="mb-auto flex h-[77px] w-[5px] items-center justify-center border border-[#b5b5b5] bg-gradient-to-r from-[#f7f7f7] to-[#d4d4d4]">≡</div><span>▾</span>
      </div>
    </div>
  );
}

const cond = [["Não compareceu", 37, "Retorno", 17], ["Marcado", 20, "Preferencial", 26], ["Pronto p/ Atender", 38, "Exame Realizado", 39], ["Em Atendimento", 36, "Desistiu", 18], ["Já Atendido (Finalizad", 48, "Chamou", 18], ["Atrasado", 20, "Realizando Audio", 38]];

function FormR() {
  const row = "flex h-[8.6px] items-center";
  return (
    <div className="flex h-[52.5px] w-[381px] border-b border-[#999] bg-white text-[5.6px] leading-[7px] text-[#222]">
      <div className="w-[207px] pt-[1px]">
        <div className={row}><Label c="w-[26px]" w={16}>Horário</Label><Field c="w-[14px]" w={11.5}>08:00</Field><Label c="w-[23px]" w={19}>Chegada</Label><Field c="w-[15px] bg-[#ffc4c8]" w={12}>08:06</Field><Label c="w-[20px]" w={17}>Entrada</Label><Field c="w-[43px] bg-[#ffc4c8]" /><Label c="w-[14px]" w={12}>Saida</Label><Field c="w-[49px] bg-[#ffc4c8]" /></div>
        <div className={row}><Label c="w-[26px]" w={19}>Paciente</Label><Field c="w-[20px]" w={13} right>77394</Field><Mag c="mx-[1px]" /><Field c="w-[150px]" w={66}>ARNALDO PEREIRA GOMES</Field></div>
        <div className={row}><Label c="w-[26px]" w={25}>Observação</Label><Field c="w-[179px]" w={20}>Consulta</Field></div>
        <div className={row}><Label c="w-[26px]" w={18}>Telefone</Label><Field c="w-[40px]" w={34}>(77 ) 9969-3868</Field><div className="ml-[2px] mr-[3px]"><Phone /></div><T w={27} c="mr-[2px]">Telefone Aux</T><Field c="w-[41px]" w={29}>77 34256917</Field><div className="ml-[2px]"><Phone /></div></div>
        <div className={row}><Label c="w-[26px]" w={19}>Convênio</Label><Field c="w-[16px]" w={3} right>4</Field><Mag c="ml-[2px] mr-[1px]" /><Field c="w-[64px] bg-[#ffffe1]" w={27}>PLANSERV</Field><Check on c="ml-[3px] mr-[1px]" /><T w={12} c="mr-[3px]">Extra</T><Check c="mr-[1px]" /><T w={41}>Ocultar Calendário</T></div>
        <div className={row}><Label c="w-[26px]" w={22}>Procedim.</Label><Field c="w-[28px]" w={25}>00.01.510-0</Field><Mag c="mx-[2px]" /><Field c="w-[141px] bg-[#ffffe1]" w={130}>OTORRINOLARINGOLOGIA  - CONSULTA AMBULATORIAL</Field></div>
      </div>
      <div className="w-[37px] text-[5px] leading-[4.4px]">
        <T w={24} c="ml-[3px]">Contato por</T>
        <div className="flex items-center gap-[1px] pl-[3px]"><Radio /><T w={17}>Pessoal</T></div>
        <div className="flex items-center gap-[1px] pl-[3px]"><Radio /><T w={18}>Telefone</T></div>
        <div className="mt-[3px] flex h-[19px] w-[36px] items-center justify-center border border-[#ddd] bg-[#f2f2f2] text-[8px] text-[#777]">✓</div>
      </div>
      <div className="mt-[4px] h-[48px] w-[113px] border border-[#e0e0e0]">
        <T w={50} c="-mt-[4.5px] ml-[3px] bg-white leading-[6px]">Condição da Marcação</T>
        {cond.map((e, i) => (
          <div key={i} className={"flex h-[7.55px] items-center pl-[2px] " + (i ? "" : "mt-[1px]")}><Radio on={i === 4} /><div className="ml-[1px] w-[49px]"><T w={e[1]}>{e[0]}</T></div><Radio /><div className="ml-[1px]"><T w={e[3]}>{e[2]}</T></div></div>
        ))}
      </div>
    </div>
  );
}

function PanelR() {
  return (
    <div className="ml-[2px] w-[112px] bg-white text-[5.8px] leading-[7px] text-[#222]">
      <T w={28} c="ml-[4px] h-[5px] text-[5.4px] font-bold leading-[5px]">Profissional</T>
      <div className="flex h-[9px] items-center"><T w={16} c="mr-[2px]">Médico</T><Field c="w-[13px] bg-[#e6e6c6]" w={3}>2</Field><Field c="w-[75px] bg-[#e6e6c6]" w={64}>GLAUBER FERRAZ AGUIAR</Field><span className="-ml-[7px] flex h-[7px] w-[6px] items-center justify-center border border-[#888] bg-[#ececec] text-[4px]">▾</span></div>
      <div className="flex h-[10px] items-center"><T w={15} c="ml-[1px] mr-[2px]">Espec.</T><T w={15} c="mr-[67px]">Sócios</T><Question /></div>
      <div className="border-t border-[#ddd]"><T w={11} c="ml-[4px] h-[7px] font-bold">Data</T></div>
      <Calendar c="ml-[12px] mt-[7.5px] h-[60px] w-[85px] px-[2px]" />
      <div className="mt-[9px] flex h-[10px] items-center pl-[11px]"><Printer /><T w={49} c="ml-[2px] text-[5.4px] font-bold">{"-> Imprimir Agenda"}</T><Check c="mb-[3px] ml-[5px] mr-[7px]" /><Gem color="#888" /><div className="w-[4px]" /><Gem color="#d3c520" /></div>
      <div className="mt-[9px] border-t border-[#bbb]" />
      <div className="grid grid-cols-[14px_62px_8px_1fr] grid-rows-[11.5px_11.5px_11.5px_11.5px] items-center pl-[1px] pt-[1px]">
        <svg viewBox="0 0 22 14" className="h-[8px] w-[11px]"><path d="M1 6l4-4h5v-1h11v10H1z" fill="#fff" stroke="#222" strokeWidth="1.4" /><path d="M10 5h9v2h-9z" fill="#e32525" /><path d="M4 1h6" stroke="#e32525" strokeWidth="2" /><circle cx="6" cy="11" r="2.3" /><circle cx="17" cy="11" r="2.3" /></svg><T w={56}>Paciente em atendimento</T>
        <svg viewBox="0 0 20 20" className="-ml-[4px] size-[10px]"><circle cx="10" cy="10" r="8" fill="#d02a28" stroke="#d02a28" strokeWidth="3" strokeDasharray="2.5 2" /><circle cx="11" cy="10" r="4" fill="#8c8c8c" stroke="#4a2525" /></svg><T w={18}>Covid-19</T>
        <Refresh c="size-[10px]" /><T w={43}>Paciente em Pausa</T>
        <svg viewBox="0 0 20 20" className="-ml-[4px] size-[10px]"><circle cx="10" cy="10" r="8.5" fill="#fff" stroke="#e03a9a" strokeWidth="2.5" /><path d="M6 15q-1-6 3-8v8zM14 15q1-6-3-8v8zM10 4v6" fill="#f19ac8" stroke="#e03a9a" /></svg><T w={26}>Sintomático</T>
        <svg viewBox="0 0 20 16" className="h-[9px] w-[11px]" fill="#fff" stroke="#222" strokeWidth="1.3"><path d="M1 6l7-4q2 0 1 2L7 6l11 2q1 2-1 2l-5 0 0 3-3 2-5-1-3-4z" /></svg><T w={51}>Atendimento Concluido</T>
        <svg viewBox="0 0 20 20" className="-ml-[3px] size-[10px]"><path d="M2 4h12v14H2z" fill="#fff" stroke="#111" strokeWidth="3" /><path d="M5 9l4 5L18 1" fill="none" stroke="#111" strokeWidth="3" /></svg><T w={26}>Reavaliação</T>
        <svg viewBox="0 0 20 20" className="size-[9px]"><rect width="20" height="20" rx="3" fill="#28c6ac" /><circle cx="12" cy="4" r="2" /><path d="M11 7l-2 5 4 6M9 12l-5 5M6 8l5-1 4 4" stroke="#12312d" strokeWidth="2.2" fill="none" /></svg><T w={73}>Paciente desistiu do atendimento</T>
      </div>
      <div className="mt-[31.5px] flex h-[13px] w-[111px] items-center justify-center border border-[#aaa] bg-gradient-to-b from-[#f3f3f3] to-[#cfcfcf]"><T w={89} c="text-[5.6px]">Visualizar Ficha de Classificação de Risco</T></div>
      <div className="flex h-[27px] w-[111px] items-center justify-center border border-[#aaa] bg-gradient-to-b from-[#f3f3f3] to-[#d5d5d5]"><svg viewBox="0 0 24 28" className="mr-[1px] h-[15px] w-[12px]"><circle cx="20" cy="4" r="3.5" /><path d="M18 6L2 14M11 11v13M2 25q9-3 20 0" stroke="#000" strokeWidth="3.2" fill="none" /></svg><T w={37}>Chamar Paciente</T></div>
    </div>
  );
}

function RightWindow() {
  const tabs = [["Atendimento", 30, "h-[33px]"], ["Marcação", 23, "h-[27px] border-b"], ["Ilustrações", 26, "h-[29px] border-b"], ["Pesquisas", 24, "h-[28px] border-b"], ["Marc. Cirurgia", 34, "h-[37px] border-b"], ["Prontuário Digitalizado", 55, "h-[60px] border-b"]];
  return (
    <div className="flex w-[515px] flex-col bg-black">
      <div className="flex h-[289px] flex-col border-l border-[#9ab] bg-[#f0f0f0]">
        <div className="flex h-[9px] items-center bg-gradient-to-r from-[#dfe9f5] via-[#bdd3ec] to-[#d3e2f2] text-[5.4px] leading-[8px] text-[#222]">
          <svg viewBox="0 0 8 8" className="ml-[1px] mr-[1px] size-[5px]"><path d="M1 1l6 6M4 1L1 4" stroke="#3a2a2a" strokeWidth="1.5" /></svg>
          <T w={136}>Sistema de Controle Hospitalar Otorrinomed  - [Prontuário Médico]</T>
          <div className="ml-auto mr-[6px] flex gap-[5px] text-[5px] text-[#555]"><span>▭</span><span>❐</span><span className="pl-[4px]">✕</span></div>
        </div>
        <Menu c="h-[7px] bg-[#f1f4fa] pl-[2px] text-[5.2px] leading-[7px] text-[#8a8a8a]" items={[["Tabelas", 15, "mr-[5px]"], ["Profissionais", 25, "mr-[5px]"], ["Relatórios", 20, "mr-[5px]"], ["Utilitários", 19, "mr-[5px]"], ["Ajuda", 12, ""]]} />
        <div className="flex h-[15px] items-center bg-[#1c7ab2] text-white">
          <Temple c="ml-[2px] size-[12px]" />
          <div className="ml-[5px] font-['Liberation_Serif',serif]"><T w={74} c="text-[8.6px] font-bold leading-[8px]">Prontuário Médico</T><T w={57} c="text-[5px] leading-[6px]">CopyRight© GA Informática</T></div>
          <div className="ml-auto flex items-center"><Arrows color="#7e2530" /><svg viewBox="0 0 12 12" className="ml-[4px] mr-[3px] size-[12px]"><path d="M4.500 0h3v4.500H12v3H7.500V12h-3V7.500H0v-3h4.500z" fill="#8a7a76" /></svg><SnakeStaff c="mr-[3px] size-[12px]" /><Flask c="mr-[3px] size-[12px]" /><Molecule c="mr-[3px] size-[12px]" /><Eye c="mr-[2px] h-[10px] w-[12px]" /><Money c="mr-[1px] size-[15px]" /><Cards c="mr-[1px] size-[13px]" />
            <div className="flex h-[15px] w-[41px] items-center gap-[2px] bg-white pl-[1px]"><span className="flex h-[13px] w-[8px] flex-col justify-evenly bg-[#20355c]"><i className="h-[1px] bg-white/60" /><i className="h-[1px] bg-white/60" /><i className="h-[1px] bg-white/60" /></span>
              <div className="text-[#14285a]"><T w={28} c="h-[10px] text-[12px] font-bold leading-[10px]">GA</T><T w={29} c="h-[4px] text-[4.5px] leading-[4px] text-[#2b57a6]">informática</T></div>
            </div>
          </div>
        </div>
        <div className="flex h-[249.5px] pt-[1.5px]">
          <div className="w-[16px] text-[5.6px] font-bold leading-[6px] text-[#222]">
            {tabs.map((t) => <div key={t[0]} className={"flex items-center justify-center border-r border-[#999] " + t[2]}><div className="rotate-180"><T v w={t[1]}>{t[0]}</T></div></div>)}
          </div>
          <div className="ml-[2px] w-[382px] border-l border-t border-[#999] bg-white">
            <div className="flex h-[12.5px] w-[381px] bg-[#800080] text-[5.4px] font-bold leading-[7px]">
              {[["Todos", 13, "w-[24px]"], ["Manhã", 14, "w-[24px]"], ["Tarde", 12, "w-[23px]"]].map((b) => <div key={b[0]} className={"flex items-center justify-center border border-[#999] bg-[#ececec] " + b[2]}><T w={b[1]}>{b[0]}</T></div>)}
              <div className="flex items-center pl-[91px] text-[6px] text-white"><T w={54}>Pacientes Marcados</T></div>
            </div>
            <TableR />
            <FormR />
            <div className="flex h-[18px] w-[381px] items-center bg-white text-[5.6px] font-bold leading-[7px] text-[#222]"><T w={48} c="mr-[3px]">Pacientes Marcados</T><div className="mb-[1px] flex h-[15px] w-[53px] items-center justify-center border border-[#999] bg-[#cfcfcf]"><T w={49}>Pacientes Atendidos</T></div></div>
          </div>
          <PanelR />
        </div>
        <div className="flex h-[8px] items-center justify-between border-t border-[#999] bg-[#f0f0f0] px-[1px] font-['Liberation_Serif',serif] text-[5px] leading-[6px] text-[#222]"><T w={76} c="font-['Liberation_Sans',sans-serif]">Usuário:  2  GLAUBER FERRAZ AGUIAR</T><T w={106}>CopyRight® Antonio Ribeiro dos Santos Jr. - Versão: 2.0.4.82</T></div>
      </div>
    </div>
  );
}

export default function App() {
  return (
    <div className="h-[677px] w-[1150px] overflow-hidden bg-white pl-[15px] pt-[35px] font-['Liberation_Sans',Arial,sans-serif]">
      <div className="flex h-[341px] w-[1119px]">
        <LeftWindow />
        <RightWindow />
      </div>
    </div>
  );
}
